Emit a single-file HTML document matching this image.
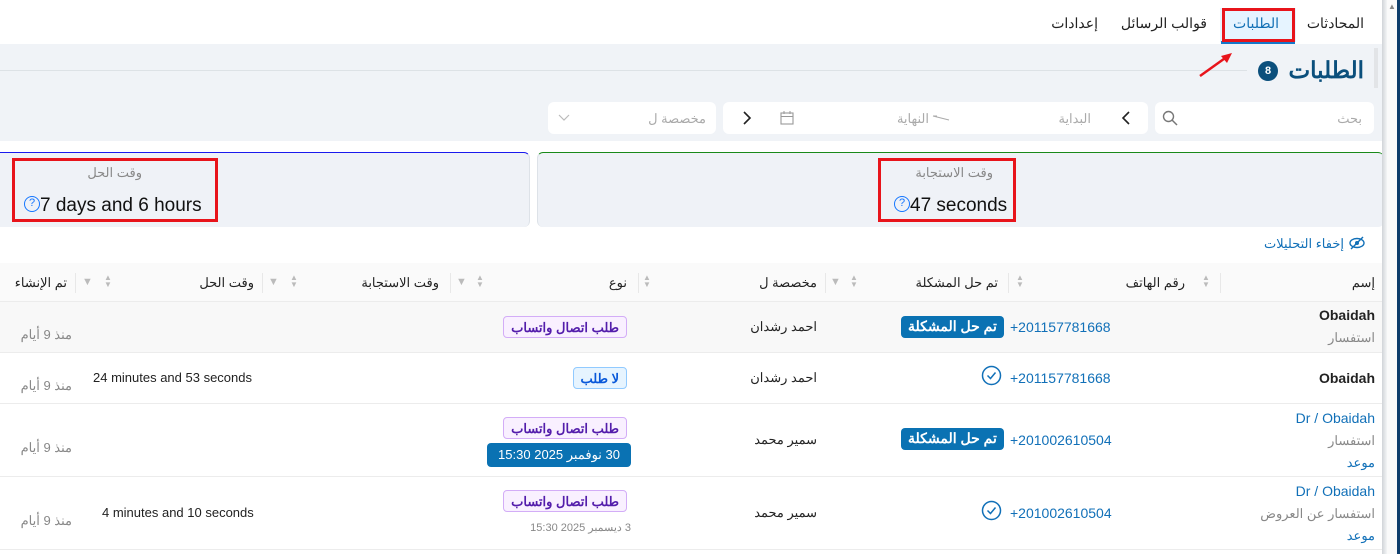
<!DOCTYPE html>
<html><head><meta charset="utf-8"><style>
*{box-sizing:border-box;margin:0;padding:0}
body{width:1400px;height:554px;overflow:hidden;position:relative;background:#fff;font-family:"Liberation Sans","Noto Sans CJK SC",sans-serif;color:#222;font-size:13px}
.a{position:absolute;white-space:nowrap}
.r{direction:rtl}
.box{position:absolute;background:#fff;border-radius:6px}
.badge{position:absolute;border-radius:4px;font-size:13px;font-weight:bold;padding:0 7px;height:22px;line-height:21px;direction:rtl;white-space:nowrap}
.pur{background:#f9f0ff;border:1px solid #d3adf7;color:#531dab}
.blu{background:#e6f4ff;border:1px solid #91caff;color:#0958d9}
.dk{background:#0a72b3;color:#fff}
.hl{position:absolute;left:0;width:1382px;height:1px;background:#ececec}
.sep{position:absolute;top:273px;width:1px;height:20px;background:#e8e8e8}
.g{color:#888}
.ph{color:#1170b8;font-size:14px}
.q{display:inline-block;width:16px;height:16px;border:1.5px solid #1677ff;border-radius:50%;color:#1677ff;font-size:11px;text-align:center;line-height:13px;vertical-align:middle;position:relative;top:-2px}
</style></head><body>
<!-- nav -->
<div class="a" style="left:1220px;top:8px;width:76px;height:34px;background:#e6f4ff"></div>
<div class="a" style="left:1221px;top:41px;width:74px;height:3px;background:#1677c9"></div>
<div class="a" style="left:1222px;top:8px;width:73px;height:34px;border:3px solid #e8141b"></div>
<div class="a r" style="right:36px;top:15px;font-size:14px">المحادثات</div>
<div class="a r" style="right:121px;top:15px;font-size:14px;color:#1270b5">الطلبات</div>
<div class="a r" style="right:193px;top:15px;font-size:14px">قوالب الرسائل</div>
<div class="a r" style="right:302px;top:15px;font-size:14px">إعدادات</div>
<!-- gray area -->
<div class="a" style="left:0;top:44px;width:1382px;height:97px;background:#f0f3f7"></div>
<div class="a" style="left:0;top:70px;width:1247px;height:1px;background:#dde2e6"></div>
<div class="a" style="left:1374px;top:48px;width:4px;height:40px;background:#e2e4e7"></div>
<div class="a r" style="right:36px;top:57px;font-size:23px;font-weight:bold;color:#0b4f7c">الطلبات</div>
<div class="a" style="left:1258px;top:61px;width:20px;height:20px;border-radius:50%;background:#0b4f7c;color:#fff;font-size:11px;font-weight:bold;text-align:center;line-height:20px">8</div>
<svg class="a" style="left:1196px;top:50px" width="42" height="30"><line x1="4" y1="26" x2="32" y2="6" stroke="#e8141b" stroke-width="2.5"/><path d="M36 3 L25 6 L31 13 Z" fill="#e8141b"/></svg>
<!-- filters -->
<div class="box" style="left:1155px;top:102px;width:219px;height:32px"></div>
<div class="a r g" style="right:38px;top:111px;font-size:13px;color:#aaa">بحث</div>
<svg class="a" style="left:1162px;top:110px" width="16" height="16"><circle cx="6.5" cy="6.5" r="5" fill="none" stroke="#777" stroke-width="1.4"/><line x1="10" y1="10" x2="15" y2="15" stroke="#777" stroke-width="1.5"/></svg>
<div class="box" style="left:723px;top:102px;width:425px;height:32px"></div>
<svg class="a" style="left:1119px;top:110px" width="14" height="16"><path d="M10 2 L4 8 L10 14" fill="none" stroke="#222" stroke-width="1.6"/></svg>
<div class="a r" style="right:309px;top:111px;color:#aaa">البداية</div>
<svg class="a" style="left:932px;top:114px" width="18" height="8"><path d="M1 2 L5 2 M1 2 L17 6" fill="none" stroke="#aaa" stroke-width="1"/></svg>
<div class="a r" style="right:471px;top:111px;color:#aaa">النهاية</div>
<svg class="a" style="left:780px;top:111px" width="14" height="14"><rect x="1" y="2" width="12" height="11" fill="none" stroke="#999" stroke-width="1.1"/><line x1="1" y1="5.5" x2="13" y2="5.5" stroke="#999"/><line x1="4" y1="0" x2="4" y2="3" stroke="#999"/><line x1="10" y1="0" x2="10" y2="3" stroke="#999"/></svg>
<svg class="a" style="left:740px;top:110px" width="14" height="16"><path d="M4 2 L10 8 L4 14" fill="none" stroke="#222" stroke-width="1.6"/></svg>
<div class="box" style="left:548px;top:102px;width:168px;height:32px"></div>
<div class="a r" style="right:694px;top:111px;color:#aaa">مخصصة ل</div>
<svg class="a" style="left:558px;top:114px" width="12" height="8"><path d="M1 1 L6 6 L11 1" fill="none" stroke="#bbb" stroke-width="1.2"/></svg>
<!-- stats -->
<div class="a" style="left:537px;top:152px;width:847px;height:75px;background:#eff2f7;border-radius:6px;border-top:1px solid #1a8a1a;border-left:1px solid #dde2e8"></div>
<div class="a" style="left:0;top:152px;width:530px;height:75px;background:#eff2f7;border-radius:0 6px 6px 0;border-top:1px solid #1a1aee;border-right:1px solid #dde2e8"></div>
<div class="a" style="left:878px;top:158px;width:138px;height:64px;border:3px solid #e8141b"></div>
<div class="a" style="left:12px;top:158px;width:206px;height:64px;border:3px solid #e8141b"></div>
<div class="a r" style="right:407px;top:165px;color:#888;font-size:13px">وقت الاستجابة</div>
<div class="a" style="left:894px;top:195px;font-size:19px;color:#111"><span class="q">?</span>47 seconds</div>
<div class="a r" style="right:1258px;top:165px;color:#888;font-size:13px">وقت الحل</div>
<div class="a" style="left:24px;top:195px;font-size:19px;color:#111"><span class="q">?</span>7 days and 6 hours</div>
<div class="a r" style="right:56px;top:236px;color:#1170b8;font-size:13px">إخفاء التحليلات</div>
<svg class="a" style="left:1349px;top:236px" width="16" height="14"><ellipse cx="8" cy="7" rx="7" ry="4.5" fill="none" stroke="#1170b8" stroke-width="1.4"/><circle cx="8" cy="7" r="2" fill="#1170b8"/><line x1="2" y1="13" x2="14" y2="1" stroke="#1170b8" stroke-width="1.4"/></svg>
<!-- table header -->
<div class="a" style="left:0;top:263px;width:1382px;height:38px;background:#fafafa"></div>
<div class="hl" style="top:301px"></div>
<div class="a r" style="right:25px;top:275px;font-size:13px">إسم</div>
<div class="a r" style="right:215px;top:275px">رقم الهاتف</div>
<div class="a r" style="right:402px;top:275px">تم حل المشكلة</div>
<div class="a r" style="right:583px;top:275px">مخصصة ل</div>
<div class="a r" style="right:773px;top:275px">نوع</div>
<div class="a r" style="right:961px;top:275px">وقت الاستجابة</div>
<div class="a r" style="right:1146px;top:275px">وقت الحل</div>
<div class="a r" style="right:1333px;top:275px">تم الإنشاء</div>
<div class="sep" style="left:1220px"></div><div class="sep" style="left:1008px"></div><div class="sep" style="left:825px"></div><div class="sep" style="left:638px"></div><div class="sep" style="left:450px"></div><div class="sep" style="left:262px"></div><div class="sep" style="left:75px"></div>
<div class="a" style="left:1202px;top:274px;color:#bbb;font-size:8px;line-height:7px">▲<br>▼</div>
<div class="a" style="left:1016px;top:274px;color:#bbb;font-size:8px;line-height:7px">▲<br>▼</div>
<div class="a" style="left:830px;top:276px;color:#bbb;font-size:11px">▼</div><div class="a" style="left:850px;top:274px;color:#bbb;font-size:8px;line-height:7px">▲<br>▼</div>
<div class="a" style="left:643px;top:274px;color:#bbb;font-size:8px;line-height:7px">▲<br>▼</div>
<div class="a" style="left:456px;top:276px;color:#bbb;font-size:11px">▼</div><div class="a" style="left:476px;top:274px;color:#bbb;font-size:8px;line-height:7px">▲<br>▼</div>
<div class="a" style="left:268px;top:276px;color:#bbb;font-size:11px">▼</div><div class="a" style="left:290px;top:274px;color:#bbb;font-size:8px;line-height:7px">▲<br>▼</div>
<div class="a" style="left:82px;top:276px;color:#bbb;font-size:11px">▼</div><div class="a" style="left:104px;top:274px;color:#bbb;font-size:8px;line-height:7px">▲<br>▼</div>
<!-- row1 -->
<div class="a" style="left:0;top:302px;width:1382px;height:50px;background:#f8f8f8"></div>
<div class="hl" style="top:352px"></div>
<div class="a" style="right:25px;top:307px;font-weight:bold;font-size:14px">Obaidah</div>
<div class="a r g" style="right:25px;top:330px">استفسار</div>
<div class="a ph" style="left:1010px;top:319px">+201157781668</div>
<div class="badge dk" style="left:901px;top:316px;font-size:14px">تم حل المشكلة</div>
<div class="a r" style="right:583px;top:319px">احمد رشدان</div>
<div class="badge pur" style="right:773px;top:316px">طلب اتصال واتساب</div>
<div class="a r g" style="right:1328px;top:327px">منذ 9 أيام</div>
<!-- row2 -->
<div class="hl" style="top:403px"></div>
<div class="a" style="right:25px;top:370px;font-weight:bold;font-size:14px">Obaidah</div>
<div class="a ph" style="left:1010px;top:370px">+201157781668</div>
<svg class="a" style="left:981px;top:365px" width="21" height="21"><circle cx="10.5" cy="10.5" r="9" fill="none" stroke="#1170b8" stroke-width="1.5"/><path d="M6.5 10.5 L9.5 13.5 L14.5 7.5" fill="none" stroke="#1170b8" stroke-width="1.5"/></svg>
<div class="a r" style="right:583px;top:370px">احمد رشدان</div>
<div class="badge blu" style="right:773px;top:367px">لا طلب</div>
<div class="a" style="left:93px;top:370px">24 minutes and 53 seconds</div>
<div class="a r g" style="right:1328px;top:378px">منذ 9 أيام</div>
<!-- row3 -->
<div class="hl" style="top:476px"></div>
<div class="a" style="right:25px;top:410px;color:#1170b8;font-size:14px">Dr / Obaidah</div>
<div class="a r g" style="right:25px;top:433px">استفسار</div>
<div class="a r" style="right:25px;top:455px;color:#1170b8">موعد</div>
<div class="a ph" style="left:1010px;top:432px">+201002610504</div>
<div class="badge dk" style="left:901px;top:428px;font-size:14px">تم حل المشكلة</div>
<div class="a r" style="right:583px;top:432px">سمير محمد</div>
<div class="badge pur" style="right:773px;top:417px">طلب اتصال واتساب</div>
<div class="badge dk" style="right:769px;top:443px;font-size:13px;height:24px;line-height:24px;padding:0 11px;font-weight:normal">30 نوفمبر 2025 15:30</div>
<div class="a r g" style="right:1328px;top:440px">منذ 9 أيام</div>
<!-- row4 -->
<div class="hl" style="top:549px"></div>
<div class="a" style="right:25px;top:483px;color:#1170b8;font-size:14px">Dr / Obaidah</div>
<div class="a r g" style="right:25px;top:506px">استفسار عن العروض</div>
<div class="a r" style="right:25px;top:528px;color:#1170b8">موعد</div>
<div class="a ph" style="left:1010px;top:505px">+201002610504</div>
<svg class="a" style="left:981px;top:500px" width="21" height="21"><circle cx="10.5" cy="10.5" r="9" fill="none" stroke="#1170b8" stroke-width="1.5"/><path d="M6.5 10.5 L9.5 13.5 L14.5 7.5" fill="none" stroke="#1170b8" stroke-width="1.5"/></svg>
<div class="a r" style="right:583px;top:505px">سمير محمد</div>
<div class="badge pur" style="right:773px;top:490px">طلب اتصال واتساب</div>
<div class="a r g" style="right:769px;top:521px;font-size:11px">3 ديسمبر 2025 15:30</div>
<div class="a" style="left:102px;top:505px">4 minutes and 10 seconds</div>
<div class="a r g" style="right:1328px;top:513px">منذ 9 أيام</div>
<!-- right scrollbar -->
<div class="a" style="left:1382px;top:0;width:5px;height:554px;background:linear-gradient(to right,#d0d4d8,#f4f5f6)"></div>
<div class="a" style="left:1387px;top:0;width:10px;height:554px;background:#fafafa"></div>
<div class="a" style="left:1388px;top:2px;color:#888;font-size:8px">▲</div>
<div class="a" style="left:1397px;top:0;width:3px;height:554px;background:#0d3d6b"></div>
</body></html>
